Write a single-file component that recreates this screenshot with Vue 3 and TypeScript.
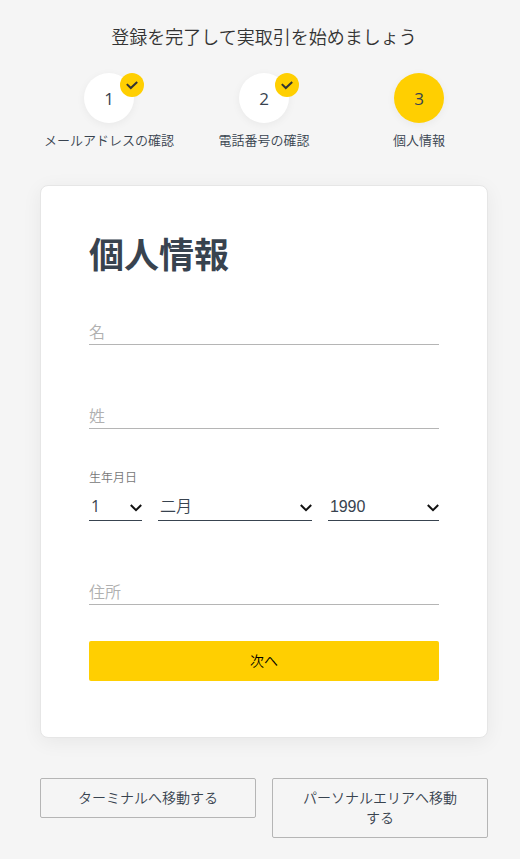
<script setup lang="ts">
import { ref } from 'vue'

interface Step {
  id: number
  label: string
  done: boolean
  active: boolean
}

const steps: Step[] = [
  { id: 1, label: 'メールアドレスの確認', done: true, active: false },
  { id: 2, label: '電話番号の確認', done: true, active: false },
  { id: 3, label: '個人情報', done: false, active: true },
]

const firstName = ref('')
const lastName = ref('')
const address = ref('')
const day = ref('1')
const month = ref('二月')
const year = ref('1990')

const days: string[] = Array.from({ length: 31 }, (_, i) => String(i + 1))
const months: string[] = ['一月', '二月', '三月', '四月', '五月', '六月', '七月', '八月', '九月', '十月', '十一月', '十二月']
const years: string[] = Array.from({ length: 80 }, (_, i) => String(2005 - i))
</script>

<template>
  <main class="page">
    <p class="intro">登録を完了して実取引を始めましょう</p>

    <ol class="steps">
      <li v-for="step in steps" :key="step.id" class="step">
        <span class="circle" :class="{ active: step.active }">
          {{ step.id }}
          <span v-if="step.done" class="badge">
            <svg width="12" height="9" viewBox="0 0 12 9"><path d="M0.8 3.1 4.8 7 11.2 1.1" /></svg>
          </span>
        </span>
        <span class="step-label">{{ step.label }}</span>
      </li>
    </ol>

    <form class="card" @submit.prevent>
      <h1>個人情報</h1>
      <input v-model="firstName" class="field" type="text" placeholder="名" />
      <input v-model="lastName" class="field second" type="text" placeholder="姓" />
      <div class="birth-label">生年月日</div>
      <div class="birth">
        <div class="select">
          <select v-model="day" class="day"><option v-for="d in days" :key="d">{{ d }}</option></select>
          <svg class="chevron" width="12" height="8" viewBox="0 0 12 8"><path d="M0.8 1 6 6.2 11.2 1" /></svg>
        </div>
        <div class="select">
          <select v-model="month"><option v-for="m in months" :key="m">{{ m }}</option></select>
          <svg class="chevron" width="12" height="8" viewBox="0 0 12 8"><path d="M0.8 1 6 6.2 11.2 1" /></svg>
        </div>
        <div class="select">
          <select v-model="year" class="year"><option v-for="y in years" :key="y">{{ y }}</option></select>
          <svg class="chevron" width="12" height="8" viewBox="0 0 12 8"><path d="M0.8 1 6 6.2 11.2 1" /></svg>
        </div>
      </div>
      <input v-model="address" class="field address" type="text" placeholder="住所" />
      <button class="next" type="submit">次へ</button>
    </form>

    <div class="links">
      <button class="outline" type="button">ターミナルへ移動する</button>
      <button class="outline" type="button">パーソナルエリアへ移動する</button>
    </div>
  </main>
</template>

<style>
body {
  margin: 0;
  background: #f5f5f5;
}
</style>

<style scoped>
* {
  box-sizing: border-box;
}
.page {
  height: 859px;
  padding: 23px 32px 0 40px;
  overflow: hidden;
  background: #f5f5f5;
  color: #38434f;
  font-family: 'Noto Sans CJK JP', sans-serif;
  font-weight: 350;
}
.intro {
  margin: 0 0 24px;
  font-size: 18px;
  line-height: 26px;
  text-align: center;
  color: #333;
}
.steps {
  display: grid;
  grid-template-columns: repeat(3, 155px);
  justify-content: center;
  margin: 0 -10px;
  padding: 0;
  list-style: none;
}
.step {
  display: flex;
  flex-direction: column;
  align-items: center;
}
.circle {
  position: relative;
  width: 50px;
  height: 50px;
  border-radius: 50%;
  background: #fff;
  box-shadow: 0 2px 8px rgba(0, 0, 0, 0.05);
  font-family: 'Open Sans', sans-serif;
  font-size: 17px;
  font-weight: 400;
  line-height: 51px;
  text-align: center;
}
.circle.active {
  background: #ffcf01;
}
.badge {
  position: absolute;
  top: 0;
  right: -10px;
  display: flex;
  align-items: center;
  justify-content: center;
  width: 24px;
  height: 24px;
  border-radius: 50%;
  background: #ffcf01;
}
.badge path {
  fill: none;
  stroke: #333;
  stroke-width: 2;
}
.step-label {
  margin-top: 7px;
  font-size: 13px;
  line-height: 20px;
  white-space: nowrap;
}
.card {
  display: flex;
  flex-direction: column;
  height: 553px;
  margin-top: 35px;
  padding: 41px 48px 0;
  border: 1px solid #e6e6e6;
  border-radius: 8px;
  background: #fff;
  box-shadow: 0 4px 20px rgba(0, 0, 0, 0.06);
}
h1 {
  margin: 0;
  font-size: 35px;
  font-weight: 700;
  line-height: 52px;
}
.field {
  width: 100%;
  height: 28px;
  margin: 38px 0 0;
  padding: 1px 0 0;
  border: 0;
  border-bottom: 1px solid #b5b5b5;
  border-radius: 0;
  outline: 0;
  background: transparent;
  color: inherit;
  font: inherit;
  font-size: 16px;
}
.field::placeholder {
  color: #b0b0b0;
  opacity: 1;
}
.field.second {
  margin-top: 56px;
}
.birth-label {
  margin-top: 39px;
  font-size: 12px;
  line-height: 18px;
  color: #777;
}
.birth {
  display: grid;
  grid-template-columns: 53px 154px 111px;
  gap: 16px;
  margin-top: 7px;
}
.select {
  display: flex;
  align-items: center;
  height: 28px;
  border-bottom: 1px solid #38434f;
}
select {
  flex: 1;
  min-width: 0;
  height: 27px;
  padding: 0 2px 3px;
  border: 0;
  outline: 0;
  appearance: none;
  background: transparent;
  color: inherit;
  font: inherit;
  font-size: 16px;
}
select.day {
  padding-bottom: 1px;
  font-family: 'Open Sans', sans-serif;
  font-weight: 400;
}
select.year {
  padding-bottom: 0;
  font-family: 'Liberation Sans', Arial, sans-serif;
  font-weight: 400;
  letter-spacing: -0.1px;
}
.chevron {
  flex: none;
  margin-top: 2px;
}
.chevron path {
  fill: none;
  stroke: #111;
  stroke-width: 2;
}
.field.address {
  margin-top: 56px;
}
.next {
  height: 40px;
  margin: 36px 0 0;
  padding: 0 0 2px;
  border: 0;
  border-radius: 2px;
  background: #ffcf01;
  color: #000;
  font: inherit;
  font-size: 14px;
}
.links {
  display: grid;
  grid-template-columns: 1fr 1fr;
  gap: 16px;
  align-items: start;
  margin-top: 40px;
}
.outline {
  padding: 8px 29px 10px;
  border: 1px solid #b5b5b5;
  border-radius: 2px;
  background: transparent;
  color: inherit;
  font: inherit;
  font-size: 14px;
  line-height: 20px;
}
</style>
